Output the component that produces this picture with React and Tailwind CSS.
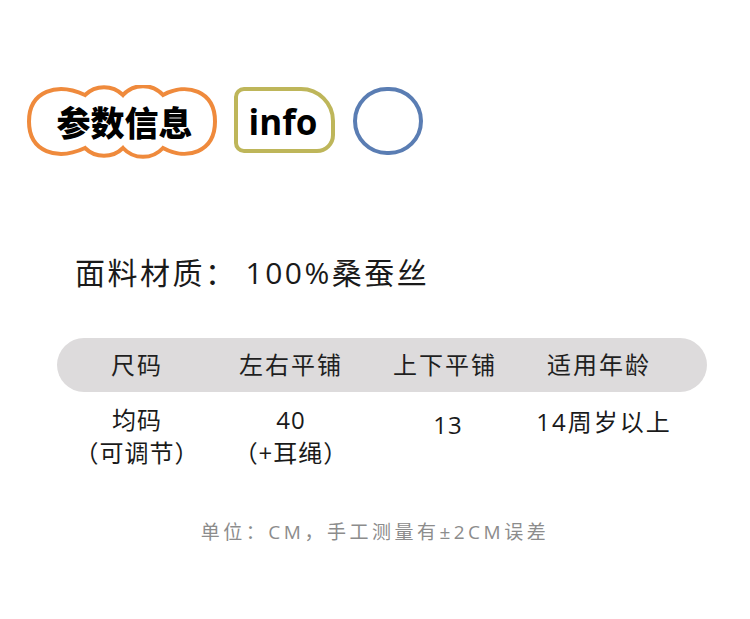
export default function App() {
  const cols = ['尺码', '左右平铺', '上下平铺', '适用年龄']
  const cjk = { fontFamily: '"Open Sans", "Noto Sans CJK SC", sans-serif' }

  return (
    <div className="w-[750px] h-[619px] bg-white overflow-hidden" style={cjk}>
      {/* badges */}
      <div className="flex items-start pt-[85px] pl-[27px]">
        <div className="relative w-[190px] h-[74px] flex items-center justify-center">
          <svg className="absolute inset-0" width="190" height="74" viewBox="0 0 190 74" fill="none">
            <path
              d="M58 10 A27 27 0 0 1 96 10 A27 27 0 0 1 136 10 C160 -3 188 6 188 36.5 C188 67 160 76 136 63 A27 27 0 0 1 96 63 A27 27 0 0 1 58 63 C30 76 2 67 2 36.5 C2 6 30 -3 58 10 Z"
              stroke="#ef8a3c"
              strokeWidth="4"
            />
          </svg>
          <span className="relative text-[34px] font-black text-black leading-none ml-[5px]" style={{ fontFamily: '"Noto Sans CJK SC", sans-serif' }}>
            参数信息
          </span>
        </div>
        <div className="ml-[17px] mt-[2px] w-[101px] h-[66px] border-4 border-[#beb65a] rounded-l-[10px] rounded-tr-[34px] rounded-br-[18px] flex items-center justify-center">
          <span className="text-[35px] font-bold text-black leading-none pr-[3px] pt-[3px]" style={{ fontFamily: '"Open Sans", sans-serif' }}>
            info
          </span>
        </div>
        <div className="ml-[18px] mt-[2px] w-[70px] h-[68px] rounded-full border-4 border-[#5a7db3]" />
      </div>

      {/* material */}
      <div className="mt-[94px] pl-[75px] text-[30px] leading-[40px] tracking-[2.5px] text-[#1a1a1a]">
        面料材质：<span className="ml-[8px]">100%</span>桑蚕丝
      </div>

      {/* table */}
      <div className="mt-[45px] ml-[57px] w-[650px] h-[54px] rounded-full bg-[#dddbdc] flex items-center pl-[3px]">
        {cols.map((c) => (
          <div key={c} className="w-[154px] text-center text-[24px] tracking-[2px] text-[#1f1f1f]">
            {c}
          </div>
        ))}
      </div>
      <div className="mt-[11px] ml-[60px] flex text-[24px] leading-[33px] text-[#1a1a1a] tracking-[1px]">
        <div className="w-[154px] text-center">
          <div>均码</div>
          <div>（可调节）</div>
        </div>
        <div className="w-[154px] text-center">
          <div>40</div>
          <div>（+耳绳）</div>
        </div>
        <div className="w-[154px] text-center pt-[5px] pl-[6px]">13</div>
        <div className="w-[154px] text-center pt-[2px] pl-[10px] tracking-[2px]">14周岁以上</div>
      </div>

      {/* note */}
      <div className="mt-[50px] text-center text-[19px] leading-[26px] tracking-[3.5px] text-[#8c8c8c]">
        单位：CM，手工测量有±2CM误差
      </div>
    </div>
  )
}
